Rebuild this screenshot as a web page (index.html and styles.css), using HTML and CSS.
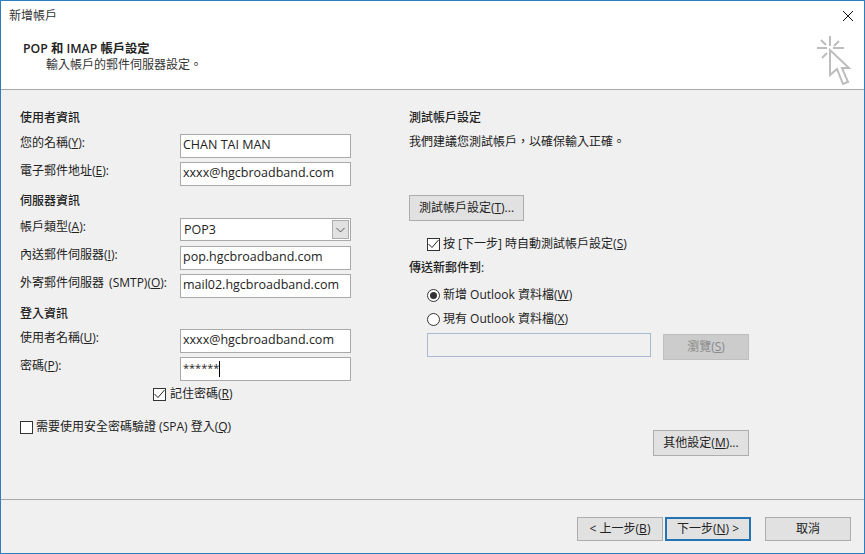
FILE: index.html
```html
<!DOCTYPE html>
<html lang="zh-Hant">
<head>
<meta charset="utf-8">
<title>新增帳戶</title>
<link rel="stylesheet" href="styles.css">
</head>
<body>
<div class="window">
  <header class="top">
    <div class="titlebar">
      <span class="title">新增帳戶</span>
      <svg class="close" width="12" height="12" viewBox="0 0 12 12"><path d="M1 1L11 11M11 1L1 11" stroke="#111" stroke-width="1" fill="none"/></svg>
    </div>
    <div class="banner">
      <div class="banner-text">
        <div class="banner-title">POP 和 IMAP 帳戶設定</div>
        <div class="banner-sub">輸入帳戶的郵件伺服器設定。</div>
      </div>
      <svg class="wizard" width="36" height="50" viewBox="0 0 36 50">
        <path d="M1 12H11M17 12H28M14 0V10M5 4L10 9M23 5L18 10M6 22L11 17" stroke="#bdbdbd" stroke-width="2" fill="none"/>
        <path d="M14 14V39L21 33L27 48L32 46L26 32L33 32Z" fill="#fff" stroke="#bdbdbd" stroke-width="2" stroke-linejoin="miter"/>
      </svg>
    </div>
  </header>
  <main class="content">
    <section class="col-left">
      <h2 class="group first">使用者資訊</h2>
      <div class="row"><label class="lbl">您的名稱(<u>Y</u>):</label><div class="input">CHAN TAI MAN</div></div>
      <div class="row"><label class="lbl">電子郵件地址(<u>E</u>):</label><div class="input">xxxx@hgcbroadband.com</div></div>
      <h2 class="group second">伺服器資訊</h2>
      <div class="row"><label class="lbl">帳戶類型(<u>A</u>):</label>
        <div class="input combo"><span>POP3</span>
          <span class="drop"><svg width="9" height="6" viewBox="0 0 9 6"><path d="M0.500 1L4.500 5L8.500 1" stroke="#555" fill="none"/></svg></span>
        </div>
      </div>
      <div class="row"><label class="lbl">內送郵件伺服器(<u>I</u>):</label><div class="input">pop.hgcbroadband.com</div></div>
      <div class="row"><label class="lbl">外寄郵件伺服器 (SMTP)(<u>O</u>):</label><div class="input">mail02.hgcbroadband.com</div></div>
      <h2 class="group third">登入資訊</h2>
      <div class="row"><label class="lbl">使用者名稱(<u>U</u>):</label><div class="input">xxxx@hgcbroadband.com</div></div>
      <div class="row"><label class="lbl">密碼(<u>P</u>):</label><div class="input pw">******<span class="caret"></span></div></div>
      <div class="check remember">
        <span class="box"><svg width="11" height="10" viewBox="0 0 11 10"><path d="M0.500 5L4 8.500L10.500 1" stroke="#222" fill="none"/></svg></span>
        <span>記住密碼(<u>R</u>)</span>
      </div>
      <div class="check spa"><span class="box"></span><span>需要使用安全密碼驗證 (SPA) 登入(<u>Q</u>)</span></div>
    </section>
    <section class="col-right">
      <h2 class="group first">測試帳戶設定</h2>
      <p class="hint">我們建議您測試帳戶，以確保輸入正確。</p>
      <button class="btn test" type="button">測試帳戶設定(<u>T</u>)...</button>
      <div class="check auto">
        <span class="box"><svg width="11" height="10" viewBox="0 0 11 10"><path d="M0.500 5L4 8.500L10.500 1" stroke="#222" fill="none"/></svg></span>
        <span>按 [下一步] 時自動測試帳戶設定(<u>S</u>)</span>
      </div>
      <h2 class="group deliver">傳送新郵件到:</h2>
      <div class="radio r1"><span class="dot on"></span><span>新增 Outlook 資料檔(<u>W</u>)</span></div>
      <div class="radio r2"><span class="dot"></span><span>現有 Outlook 資料檔(<u>X</u>)</span></div>
      <div class="browse">
        <div class="path"></div>
        <button class="btn disabled" type="button">瀏覽(<u>S</u>)</button>
      </div>
      <div class="more"><button class="btn other" type="button">其他設定(<u>M</u>)...</button></div>
    </section>
  </main>
  <footer class="foot">
    <button class="btn" type="button">&lt; 上一步(<u>B</u>)</button>
    <button class="btn primary" type="button">下一步(<u>N</u>) &gt;</button>
    <button class="btn cancel" type="button">取消</button>
  </footer>
</div>
</body>
</html>
```
FILE: styles.css
```css
* { box-sizing: border-box; }
html, body { margin: 0; padding: 0; }
body {
  width: 865px;
  height: 554px;
  overflow: hidden;
  font-family: "Open Sans", "Noto Sans CJK TC", sans-serif;
  font-size: 12px;
  color: #222;
}
.window {
  width: 865px;
  height: 554px;
  display: flex;
  flex-direction: column;
  border: 1px solid #2b7fc0;
  background: #f0f0f0;
}
.top {
  height: 89px;
  background: #fff;
  border-bottom: 1px solid #a9a9a9;
  flex: none;
}
.titlebar {
  height: 30px;
  display: flex;
  align-items: center;
  justify-content: space-between;
  padding: 0 10px 0 8px;
}
.title { font-size: 12px; color: #333; line-height: 30px; }
.banner {
  display: flex;
  justify-content: space-between;
  padding: 5px 12px 0 22px;
}
.banner-text { padding-top: 2px; }
.banner-title { font-size: 12.300px; font-weight: 600; color: #222; line-height: 18px; margin-top: 2px; }
.banner-sub { padding-left: 23px; line-height: 15px; margin-top: -1px; color: #333; }
.content {
  flex: none;
  height: 409px;
  display: grid;
  grid-template-columns: 408px 1fr;
}
.col-left { padding-left: 19px; }
.group {
  margin: 0;
  font-size: 12px;
  font-weight: 500;
  line-height: 16px;
  color: #222;
}
.first { margin-top: 20px; }
.second { margin-top: 7px; margin-bottom: 9px; }
.third { margin-top: 8px; margin-bottom: 7px; }
.col-left .first { margin-bottom: 8px; }
.row {
  display: flex;
  align-items: flex-start;
  height: 24px;
  margin-bottom: 4px;
}
.lbl { width: 160px; flex: none; line-height: 18px; word-spacing: 2px; }
.input {
  width: 171px;
  height: 24px;
  border: 1px solid #a9a9a9;
  background: #fff;
  padding-left: 2px;
  font-size: 12.500px;
  line-height: 19px;
  color: #222;
}
.combo {
  height: 23px;
  display: flex;
  justify-content: space-between;
  padding-left: 3px;
  padding-right: 1px;
  padding-top: 1px;
}
.drop {
  width: 17px;
  height: 19px;
  background: #e1e1e1;
  border: 1px solid #adadad;
  display: flex;
  align-items: center;
  justify-content: center;
}
.pw { display: flex; align-items: flex-start; font-size: 11px; }
.caret { width: 1px; height: 16px; background: #000; margin-top: 3px; }
.check { display: flex; align-items: center; line-height: 16px; }
.box {
  width: 13px;
  height: 13px;
  flex: none;
  border: 1px solid #333;
  background: #fff;
  margin-right: 3px;
  display: flex;
  align-items: center;
  justify-content: center;
}
.remember { margin-left: 133px; margin-top: 5px; }
.remember .box { margin-right: 4px; }
.spa { margin-top: 17px; }
.hint { margin: 8px 0 0; line-height: 16px; }
.btn {
  font: inherit;
  color: #222;
  height: 26px;
  width: 86px;
  padding: 0;
  background: #e1e1e1;
  border: 1px solid #adadad;
  line-height: 22px;
  display: block;
}
.test { width: 115px; margin-top: 45px; }
.auto { margin: 15px 0 0 18px; }
.deliver { margin-top: 8px; }
.radio { display: flex; align-items: center; margin-left: 18px; line-height: 16px; }
.r1 { margin-top: 11px; }
.r2 { margin-top: 8px; }
.dot {
  width: 13px;
  height: 13px;
  border-radius: 50%;
  border: 1px solid #333;
  background: #fff;
  margin-right: 3px;
  flex: none;
  display: flex;
  align-items: center;
  justify-content: center;
}
.dot.on::after {
  content: "";
  width: 7px;
  height: 7px;
  border-radius: 50%;
  background: #333;
}
.browse { display: flex; margin: 6px 0 0 18px; align-items: flex-start; }
.path {
  width: 224px;
  height: 24px;
  background: #f0f0f0;
  border: 1px solid #a9b9cf;
}
.disabled {
  margin: 1px 0 0 12px;
  background: #cccccc;
  border-color: #bfbfbf;
  color: #8a8a8a;
}
.more { margin: 70px 0 0 244px; }
.other { width: 96px; }
.foot {
  flex: 1;
  border-top: 1px solid #a9a9a9;
  display: flex;
  padding: 17px 0 0 576px;
  align-items: flex-start;
  gap: 2px;
}
.foot .btn { height: 24px; line-height: 20px; }
.primary { border: 2px solid #2173b3; }
.cancel { margin-left: 12px; }
```
